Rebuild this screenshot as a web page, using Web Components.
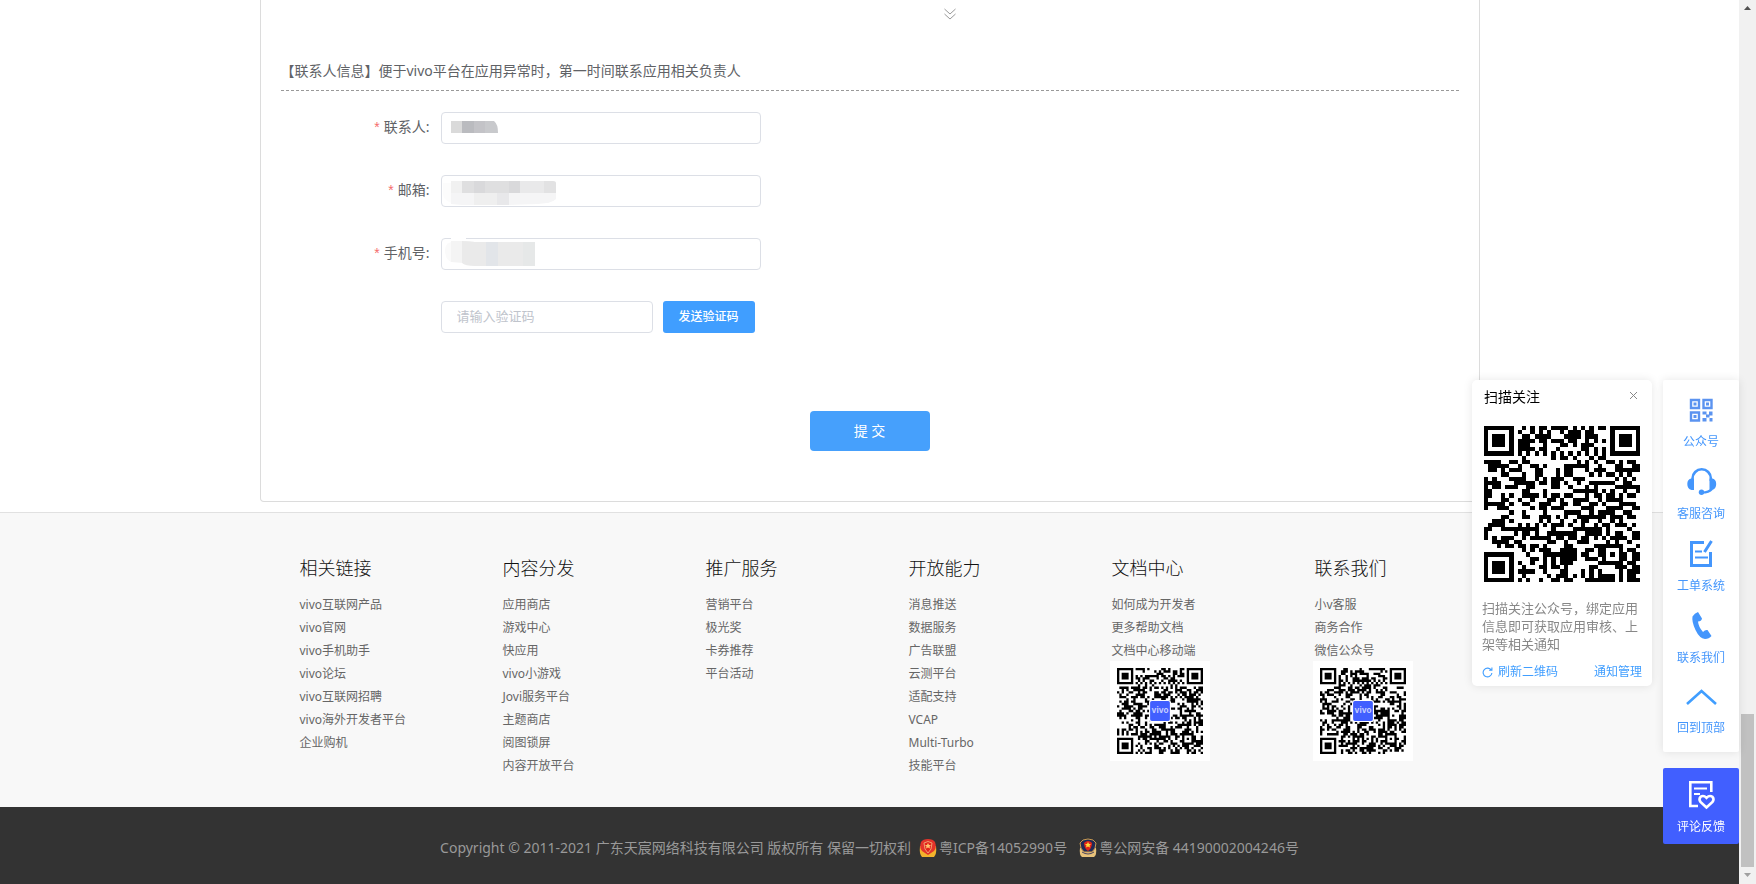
<!DOCTYPE html>
<html lang="zh-CN">
<head>
<meta charset="utf-8">
<title>vivo开放平台</title>
<style>
html,body{margin:0;height:100%}
body{font-family:"Noto Sans","Noto Sans CJK SC",sans-serif;font-size:14px;color:#606266;background:#fff;overflow:hidden}
</style>
</head>
<body>
<dev-page></dev-page>
<script>
const define=(name,html)=>customElements.define(name,class extends HTMLElement{
  connectedCallback(){
    if(this.shadowRoot)return;
    const t=document.createElement('template');
    t.innerHTML='<style>*{box-sizing:border-box}a{color:inherit;text-decoration:none}button{font:inherit;cursor:pointer}</style>'+(typeof html==='function'?html(this):html);
    this.attachShadow({mode:'open'}).append(t.content.cloneNode(true));
  }
});

/* QR symbol: finder patterns, alignment mark, and a module field from a seed */
define('qr-code',el=>{
  const n=37,seed=+el.getAttribute('seed')||1;let s=seed*7919,d='';
  const rnd=()=>{s=(s*1103515245+12345)%2147483648;return s/2147483648};
  const finder=(x,y)=>{const r=Math.max(Math.abs(x-3),Math.abs(y-3));return r===3||r<2};
  for(let y=0;y<n;y++)for(let x=0;x<n;x++){
    let on=rnd()<.51;
    if(x<8&&y<8)on=x<7&&y<7&&finder(x,y);
    else if(x>n-9&&y<8)on=x>n-8&&y<7&&finder(x-n+7,y);
    else if(x<8&&y>n-9)on=x<7&&y>n-8&&finder(x,y-n+7);
    else if(Math.abs(x-30)<3&&Math.abs(y-30)<3){const r=Math.max(Math.abs(x-30),Math.abs(y-30));on=r!==1}
    else if(y===6)on=x%2===0; else if(x===6)on=y%2===0;
    if(on)d+=`M${x} ${y}h1v1h-1z`;
  }
  const logo=el.hasAttribute('logo')?'<rect x="14" y="14" width="9" height="9" rx="1" fill="#415fff" stroke="#fff" stroke-width=".5"/><text x="18.5" y="19.500" text-anchor="middle" font-size="3.500" font-weight="700" font-family="Inter,sans-serif" fill="#c5cdff">vivo</text>':'';
  return `<style>:host{display:block}svg{display:block;width:100%;height:100%}</style><svg viewBox="0 0 37 37" preserveAspectRatio="none" role="img" aria-label="二维码"><path d="${d}" fill="#000" shape-rendering="${el.hasAttribute('logo')?'auto':'crispEdges'}"/>${logo}</svg>`;
});

define('form-field',el=>`<style>
:host{display:flex;align-items:center;height:32px}
label{width:150px;padding:0 11px 4px 0;text-align:right;flex:none}
i{font-style:normal;font-family:"Liberation Sans",sans-serif;color:#f56c6c;margin-right:4px}
.box{position:relative;width:320px;height:32px}
input{width:100%;height:32px;border:1px solid #dcdfe6;border-radius:4px;padding:0 15px;font:inherit;background:#fff}
svg{position:absolute;left:0;top:0;pointer-events:none}
</style><label for="f"><i>*</i>${el.getAttribute('label')}:</label><div class="box"><input id="f" type="text">${el.innerHTML}</div>`);

define('contact-form',`<style>
:host{display:block;padding:0 20px}
h2{margin:0;padding:0 0 8px;font-size:14px;line-height:22px;font-weight:400;border-bottom:1px dashed #999}
.rows{display:flex;flex-direction:column;gap:31px;padding:21px 0 0}
form-field{padding-left:10px}
.code{display:flex;gap:10px;padding-left:160px}
.code input{width:212px;height:32px;border:1px solid #dcdfe6;border-radius:4px;padding:0 15px 4px;font:13px "Noto Sans CJK SC",sans-serif}
.code input::placeholder{color:#c0c4cc;opacity:1}
.code button{width:92px;height:32px;border:0;border-radius:3px;background:#409eff;color:#fff;font-size:12px;font-weight:500;padding:0 0 2px}
.submit{display:block;width:120px;height:40px;margin:47px auto 50px;border:0;border-radius:4px;background:#46a0fc;color:#fff;font-size:14px;padding:0 0 2px}
</style>
<h2>【联系人信息】便于vivo平台在应用异常时，第一时间联系应用相关负责人</h2>
<form class="rows" onsubmit="return false">
<form-field label="联系人"><svg width="60" height="32"><path d="M10 9h12v12H10z" fill="#dadada"/><path d="M21 9h12v12H21z" fill="#babbbf"/><path d="M33 9h12v12H33z" fill="#c3c3c7"/><path d="M44 9h9q4 3 4 12H44z" fill="#c8c9cc"/></svg></form-field>
<form-field label="邮箱"><svg width="120" height="32"><path d="M2 8h8v20Q2 25 2 18z" fill="#fcfcfc"/><path d="M10 6h11v12H10z" fill="#f1f1f1"/><path d="M21 6h58v12H21z" fill="#dfdfe0"/><path d="M33 6h11v12H33zM68 6h11v12H68z" fill="#d9d9db"/><path d="M79 6h24v12H79z" fill="#e9e9ea"/><path d="M103 6h9q3 0 3 2v10h-12z" fill="#e2e2e3"/><path d="M10 18h105v6q-3 4-18 5l-30 1H21l-11-1z" fill="#f5f5f6"/><path d="M33 18h23v12H33z" fill="#efefef"/><path d="M56 18h12v12H56z" fill="#e8e8ea"/></svg></form-field>
<form-field label="手机号"><svg width="100" height="32"><path d="M10-1h15v5H10z" fill="#fff"/><path d="M4 12q0-6 6-8v20q-6-3-6-12z" fill="#fafafa"/><path d="M10 3h18l6 1v22l-24-2z" fill="#f4f4f4"/><path d="M21 3l13 1h60v24H34q-10 0-13-3z" fill="#eaeaea"/><path d="M45 4h12v24H45z" fill="#e2e5e9"/><path d="M82 4h12v24H82z" fill="#e6e8e8"/></svg></form-field>
<div class="code"><input type="text" placeholder="请输入验证码" aria-label="验证码"><button type="button">发送验证码</button></div>
<button class="submit" type="submit">提 交</button>
</form>`);

define('link-column',el=>`<style>
:host{display:block;flex:0 0 203px}
h3{margin:0 0 11px;font-size:18px;line-height:28px;font-weight:300;color:#111}
ul{list-style:none;margin:0;padding:0;font-size:12px;line-height:23px;color:#666}
</style><h3>${el.getAttribute('heading')}</h3><ul>${el.getAttribute('links').split('|').map(t=>`<li><a href="#">${t}</a></li>`).join('')}</ul><slot></slot>`);

define('site-footer',`<style>
:host{display:block;background:#f8f8f8;border-top:1px solid #e1e1e1}
.cols{display:flex;width:1220px;margin:0 auto;padding:41px 0 0 40px;height:294px}
.card{width:100px;height:100px;background:#fff;margin:-1px 0 0 -2px;padding:7px}
.card qr-code{width:86px;height:86px}
.legal{display:flex;align-items:center;justify-content:center;height:78px;padding-top:4px;background:#333;color:#999;font-size:14px;line-height:22px}
.legal a,.legal span{display:flex;align-items:center;white-space:pre}
.legal svg{width:18px;height:20px;margin:0 2px 0 8px}
.legal a+a svg{margin-left:12px}
</style>
<div class="cols">
<link-column heading="相关链接" links="vivo互联网产品|vivo官网|vivo手机助手|vivo论坛|vivo互联网招聘|vivo海外开发者平台|企业购机"></link-column>
<link-column heading="内容分发" links="应用商店|游戏中心|快应用|vivo小游戏|Jovi服务平台|主题商店|阅图锁屏|内容开放平台"></link-column>
<link-column heading="推广服务" links="营销平台|极光奖|卡券推荐|平台活动"></link-column>
<link-column heading="开放能力" links="消息推送|数据服务|广告联盟|云测平台|适配支持|VCAP|Multi-Turbo|技能平台"></link-column>
<link-column heading="文档中心" links="如何成为开发者|更多帮助文档|文档中心移动端"><div class="card"><qr-code seed="5" logo></qr-code></div></link-column>
<link-column heading="联系我们" links="小v客服|商务合作|微信公众号"><div class="card"><qr-code seed="9" logo></qr-code></div></link-column>
</div>
<div class="legal"><span>Copyright © 2011-2021 广东天宸网络科技有限公司 版权所有 保留一切权利</span>
<a href="#"><svg viewBox="0 0 18 20"><path d="M1 8q-1 8 2 11h12q3-3 2-11z" fill="#f3b32c"/><path d="M2 4q2-3 7-3t7 3q2 6-1 9l-6 4-6-4Q0 10 2 4z" fill="#e2332a"/><path d="M5 5q4-3 8 0 0 7-4 10-4-3-4-10z" fill="#e2231a" stroke="#f0a070"/><path d="M9 5l1 2h2l-1.500 1.500.5 2L9 9.500l-2 1 .5-2L6 7h2z" fill="#ffc36d"/></svg>粤ICP备14052990号</a>
<a href="#"><svg viewBox="0 0 18 20"><path d="M1 10q-1 7 2 9h12q3-2 2-9z" fill="#e8c27a"/><path d="M1 5q2-4 8-4t8 4q0 6-4 9H5Q1 11 1 5z" fill="#222a55" stroke="#c99a50"/><path d="M5 5q4-4 8 0 0 5-4 8-4-3-4-8z" fill="#e2231a"/><path d="M9 4l1 2h2l-1.500 1.500.5 2L9 8.500l-2 1 .5-2L6 6h2z" fill="#ffd83d"/><path d="M3 14q6 4 12 0" stroke="#4a4560" fill="none"/></svg>粤公网安备 44190002004246号</a></div>`);

define('follow-card',`<style>
:host{display:flex;flex-direction:column;width:180px;height:306px;background:#fff;border-radius:5px;box-shadow:0 0 10px rgba(0,0,0,.1);padding:6px 10px 4px}
header{display:flex;justify-content:space-between;height:40px;padding-left:2px;color:#000;line-height:22px}
header button{border:0;background:none;padding:0;width:18px;height:18px}
header svg{display:block;margin:0 0 0 5px}
qr-code{width:156px;height:156px;margin-left:2px}
p{margin:17px -2px 0 0;font-size:13px;line-height:18px;color:#888}
footer{display:flex;justify-content:space-between;margin-top:9px;font-size:12px;line-height:20px;color:#409eff}
footer a{display:flex;align-items:center;gap:5px}
</style>
<header><span>扫描关注</span><button aria-label="关闭"><svg width="9" height="9"><path d="M1 1l7 7M8 1L1 8" stroke="#888"/></svg></button></header>
<qr-code seed="3"></qr-code>
<p>扫描关注公众号，绑定应用信息即可获取应用审核、上架等相关通知</p>
<footer><a href="#"><svg width="11" height="11" viewBox="0 0 10 10" fill="none" stroke="#409eff"><path d="M9 5.500A4 4 0 1 1 8.500 3M9 .5V3H6.500"/></svg>刷新二维码</a><a href="#">通知管理</a></footer>`);

define('side-tools',`<style>
:host{display:flex;flex-direction:column;gap:16px;width:76px;font-size:12px;line-height:18px}
nav{height:372px;padding-top:14px;background:#fff;border-radius:2px;box-shadow:0 0 10px rgba(0,0,0,.1);color:#4496fc}
a{display:flex;flex-direction:column;align-items:center;gap:7px;height:72px}
svg{width:32px;height:32px;flex:none}
.up{height:60px;gap:5px}
.fb{height:76px;padding-top:10px;gap:8px;background:#415fff;border-radius:2px;color:#fff}
</style>
<nav aria-label="快捷工具">
<a href="#"><svg viewBox="0 0 32 32" fill="none" stroke="#5b93f0" stroke-width="2.400"><path d="M6 6h8v8H6zM18.500 6h8v8h-8zM6 18.500h8v8H6z"/><path d="M8.500 8.500h3v3h-3zM21 8.500h3v3h-3zM8.500 21h3v3h-3zM17.500 17.500h4v3h-4zM24 17.500h3.500v4H24zM21 20.500h3.500v3H21zM17.500 24h4v3.500h-4zM24.500 24h3v3.500h-3z" fill="#5b93f0" stroke="none"/></svg>公众号</a>
<a href="#"><svg viewBox="0 0 32 32" fill="none" stroke="#4496fc" stroke-width="2.600"><path d="M7.500 15v-2.500a9.200 9.200 0 0 1 18.400 0V15"/><path d="M9 12.500V24H6.500Q2.300 23 2.300 18T6.500 12.500zM24.500 12.500V24H27q4.200-1 4.200-6T27 12.500z" fill="#4496fc" stroke="none"/><path d="M27 23q-3 3.500-10 3.500" stroke-width="2.200"/><circle cx="16.500" cy="26.300" r="2.700" fill="#4496fc" stroke="none"/></svg>客服咨询</a>
<a href="#"><svg viewBox="0 0 32 32" fill="none" stroke="#4496fc" stroke-width="3"><path d="M19 4.500H6.500v23h19V14M26.500 3l-7 11"/><path d="M10 13.500h7M10 19.500h13" stroke-width="2"/></svg>工单系统</a>
<a href="#"><svg viewBox="0 0 32 32" fill="#4496fc"><path d="M7.500 6.500Q9.500 3 13 2l4 6.500q-.5 3-4 3 .5 5.500 5 10.500 2-2.500 4.500-2l4 6q-2.500 3-6.500 3-5.500-.5-9.500-9-4-8.500-3-13.500z"/></svg>联系我们</a>
<a href="#" class="up"><svg viewBox="0 0 32 32" fill="none" stroke="#409eff" stroke-width="2.600"><path d="M2 22L16.500 9 31 22"/></svg>回到顶部</a>
</nav>
<a href="#" class="fb"><svg viewBox="0 0 32 32" fill="none" stroke="#fff" stroke-width="2.600"><path d="M13 28H5.300V4.300h21V14"/><path d="M9 10.500h13M9 16h6" stroke-width="2"/><path d="M21.500 29.500l-6-5.500q-2-3 0-5.200 3-2 6 1 3-3 6-1 2 2.200 0 5.200z"/></svg>评论反馈</a>`);

/* Classic desktop scroll bar */
define('scroll-rail',`<style>
:host{display:flex;flex-direction:column;justify-content:flex-end;width:17px;background:#f1f1f1}
.thumb{height:153px;width:13px;margin:0 2px;background:#c1c1c1}
svg{display:block}
.gap{flex:1}
</style><svg width="17" height="17"><path d="M5 10h7L8.500 6z" fill="#505050"/></svg><div class="gap"></div><div class="thumb"></div><svg width="17" height="17"><path d="M5 6h7l-3.500 4z" fill="#a0a0a0"/></svg>`);

define('dev-page',`<style>
:host{display:flex;height:100vh}
main{flex:1;min-width:0}
.panel{width:1220px;margin:0 auto 10px;border:1px solid #dcdcdc;border-top:0;border-radius:0 0 4px 4px}
.more{display:flex;justify-content:center;height:60px;padding:8px 0 0 160px}
scroll-rail{flex:none}
.float{position:fixed;right:17px;top:380px;display:flex;gap:11px;align-items:flex-start}
</style>
<main><section class="panel"><div class="more"><svg width="14" height="13" fill="none" stroke="#999"><path d="M1.500 1l5.500 5 5.500-5M1.500 6L7 11l5.500-5"/></svg></div><contact-form></contact-form></section>
<site-footer></site-footer></main>
<div class="float"><follow-card></follow-card><side-tools></side-tools></div>
<scroll-rail></scroll-rail>`);
</script>
</body>
</html>
